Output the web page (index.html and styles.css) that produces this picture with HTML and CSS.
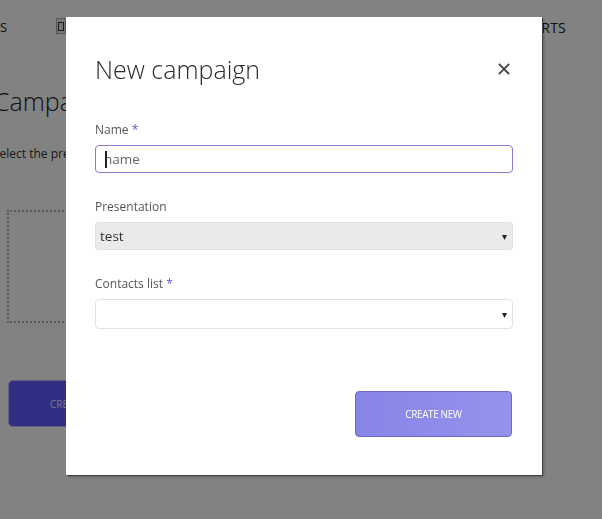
FILE: index.html
```html
<!DOCTYPE html>
<html>
<head>
<meta charset="utf-8">
<link rel="stylesheet" href="styles.css">
</head>
<body>
<div class="page">
  <div class="nav">
    <span class="nav-item nav-left">S</span>
    <span class="nav-icon"><span class="nav-icon-inner"></span></span>
    <span class="nav-spacer"></span>
    <span class="nav-item nav-right">REPORTS</span>
  </div>
  <div class="content">
    <h1 class="page-title">Campaigns</h1>
    <p class="page-sub">Select the presentation</p>
    <div class="dropzone"></div>
    <button class="bg-btn">CREATE NEW</button>
  </div>
</div>
<div class="backdrop"></div>
<div class="modal">
  <div class="modal-head">
    <h2 class="modal-title">New campaign</h2>
    <span class="close">
      <svg width="12" height="12" viewBox="0 0 12 12"><path d="M1.5 1.5 L10.5 10.5 M10.5 1.5 L1.5 10.5" stroke="#444" stroke-width="1.8" stroke-linecap="square"/></svg>
    </span>
  </div>
  <div class="field">
    <div class="label">Name <span class="req">*</span></div>
    <div class="input focused"><span class="placeholder">name</span><span class="caret"></span></div>
  </div>
  <div class="field">
    <div class="label">Presentation</div>
    <div class="select disabled"><span class="value">test</span><span class="arrow">&#9662;</span></div>
  </div>
  <div class="field">
    <div class="label">Contacts list <span class="req">*</span></div>
    <div class="select tall"><span class="value"></span><span class="arrow">&#9662;</span></div>
  </div>
  <div class="modal-foot">
    <button class="primary">CREATE NEW</button>
  </div>
</div>
</body>
</html>
```
FILE: styles.css
```css
html, body {
  margin: 0;
  padding: 0;
  width: 602px;
  height: 519px;
  overflow: hidden;
  background: #fff;
  font-family: "Open Sans", "Noto Sans", sans-serif;
}
.page {
  width: 602px;
  height: 519px;
}
.nav {
  display: flex;
  align-items: center;
  height: 54px;
}
.nav-item {
  font-size: 13px;
  color: #222;
  letter-spacing: 0.2px;
}
.nav-left {
  width: 10px;
  overflow: hidden;
  direction: rtl;
  text-align: left;
}
.nav-icon {
  display: flex;
  align-items: center;
  justify-content: center;
  width: 10px;
  height: 16px;
  margin-left: 46px;
  margin-top: -2px;
  background: #eaeaea;
  border: 1px solid #aaa;
  box-sizing: border-box;
}
.nav-icon-inner {
  width: 4px;
  height: 7px;
  border: 1px solid #333;
}
.nav-spacer { flex: 1; }
.nav-right { margin-right: 36px; font-size: 14px; }
.content {
  padding: 30px 0 0 0;
}
.page-title {
  margin: 0 0 0 -6px;
  font-weight: 300;
  font-size: 25px;
  line-height: 34px;
  color: #222;
}
.page-sub {
  margin: 27px 0 0 -7px;
  font-size: 12px;
  line-height: 17px;
  color: #333;
}
.dropzone {
  margin: 48px 0 0 7px;
  width: 140px;
  height: 113px;
  border: 2px dotted #b0b0b0;
  border-right: none;
  box-sizing: border-box;
}
.bg-btn {
  display: block;
  margin: 57px 0 0 8px;
  width: 140px;
  height: 47px;
  border: 1px solid #bcbcff;
  border-radius: 5px;
  background: #5c5aff;
  color: #e6e6ff;
  font-family: inherit;
  font-size: 10px;
  text-align: left;
  padding-left: 41px;
}
.backdrop {
  position: fixed;
  inset: 0;
  background: rgba(0, 0, 0, 0.49);
}
.modal {
  position: absolute;
  left: 66px;
  top: 17px;
  width: 476px;
  height: 458px;
  box-sizing: border-box;
  background: #fff;
  padding: 0 29px;
  box-shadow: 1px 1px 0 #444, 2px 2px 2px rgba(0,0,0,0.25);
}
.modal-head {
  display: flex;
  align-items: center;
  justify-content: space-between;
  height: 105px;
}
.modal-title {
  margin: 0;
  margin-top: -2px;
  font-weight: 300;
  font-size: 25px;
  color: #2a2a2a;
}
.close {
  display: flex;
  margin-right: 3px;
  margin-top: -2px;
}
.field {
  margin-bottom: 26px;
}
.label {
  font-size: 12px;
  color: #555;
  line-height: 16px;
  margin-bottom: 7px;
}
.req { color: #5a55c8; }
.input, .select {
  height: 28px;
  box-sizing: border-box;
  border-radius: 4px;
  display: flex;
  align-items: center;
  font-size: 13.5px;
}
.input {
  position: relative;
  border: 1px solid #857fd2;
  padding-left: 8px;
}
.caret {
  position: absolute;
  left: 9px;
  top: 5px;
  width: 1.5px;
  height: 17px;
  background: #222;
}
.placeholder {
  color: #666;
}
.select {
  border: 1px solid #e3e3e3;
  padding: 0 5px 0 4px;
  justify-content: space-between;
}
.select.tall { height: 30px; }
.select.disabled {
  background: #e9eaeb;
  border-color: #e0e0e0;
}
.value { color: #333; }
.arrow {
  font-size: 10px;
  color: #222;
}
.modal-foot {
  display: flex;
  justify-content: flex-end;
  padding-top: 36px;
  padding-right: 1px;
}
.primary {
  width: 157px;
  height: 46px;
  border: 1px solid #6e6bc8;
  border-radius: 4px;
  background: linear-gradient(90deg, #8785e6, #9493ec);
  color: #fff;
  font-family: inherit;
  font-size: 10px;
  letter-spacing: -0.4px;
}
```
